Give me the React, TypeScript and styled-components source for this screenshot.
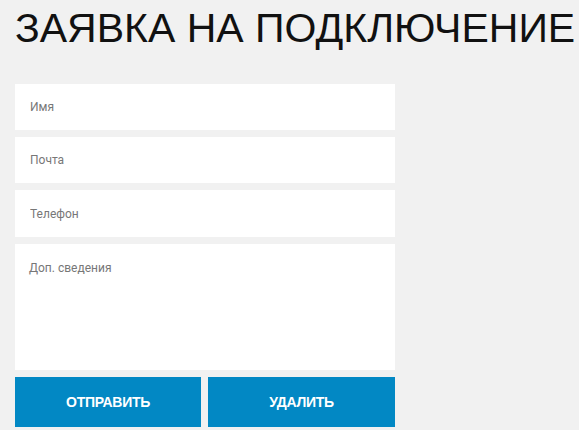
import React from 'react';
import styled, { createGlobalStyle } from 'styled-components';

const GlobalStyle = createGlobalStyle`
    html, body {
        margin: 0;
        padding: 0;
        background: #f1f1f1;
    }
    * {
        box-sizing: border-box;
    }
`

const fields = [
    { name: 'name', placeholder: 'Имя', height: 46 },
    { name: 'email', placeholder: 'Почта', height: 46 },
    { name: 'phone', placeholder: 'Телефон', height: 47 },
];

export default function App() {
    return (
        <>
            <GlobalStyle/>
            <Page>
                <Title>ЗАЯВКА НА ПОДКЛЮЧЕНИЕ</Title>
                <Form onSubmit={(e) => e.preventDefault()}>
                    {fields.map((f) => (
                        <Field key={f.name} name={f.name} placeholder={f.placeholder} $height={f.height}/>
                    ))}
                    <Notes name="notes" placeholder="Доп. сведения"/>
                    <Buttons>
                        <Button type="submit">Отправить</Button>
                        <Button type="reset">Удалить</Button>
                    </Buttons>
                </Form>
            </Page>
        </>
    );
}

const Page = styled.div`
    min-height: 430px;
    padding: 0 15px;
    background: #f1f1f1;
`

const Title = styled.h1`
    margin: 0;
    padding-top: 5px;
    font-family: 'Liberation Sans', Arial, sans-serif;
    font-weight: 400;
    font-size: 41px;
    line-height: 46px;
    color: #111;
    letter-spacing: 0;
    white-space: nowrap;
`

const Form = styled.form`
    width: 380px;
    margin-top: 33px;
    display: flex;
    flex-direction: column;
    gap: 7px;
`

const Field = styled.input<{ $height: number }>`
    height: ${(p) => p.$height}px;
    border: none;
    outline: none;
    background: #fff;
    padding: 0 15px;
    font-family: Roboto, Arial, sans-serif;
    font-size: 12px;
    color: #333;

    &::placeholder {
        color: #777;
    }
`

const Notes = styled.textarea`
    height: 126px;
    border: none;
    outline: none;
    resize: none;
    background: #fff;
    padding: 17px 14px;
    font-family: Roboto, Arial, sans-serif;
    font-size: 12px;
    line-height: 14px;
    color: #333;

    &::placeholder {
        color: #777;
    }
`

const Buttons = styled.div`
    display: grid;
    grid-template-columns: 186px 187px;
    gap: 7px;
`

const Button = styled.button`
    height: 50px;
    border: none;
    background: #0288c4;
    color: #fff;
    font-family: 'Liberation Sans', Arial, sans-serif;
    font-weight: 700;
    font-size: 14px;
    text-transform: uppercase;
    letter-spacing: -0.3px;
    cursor: pointer;
`
